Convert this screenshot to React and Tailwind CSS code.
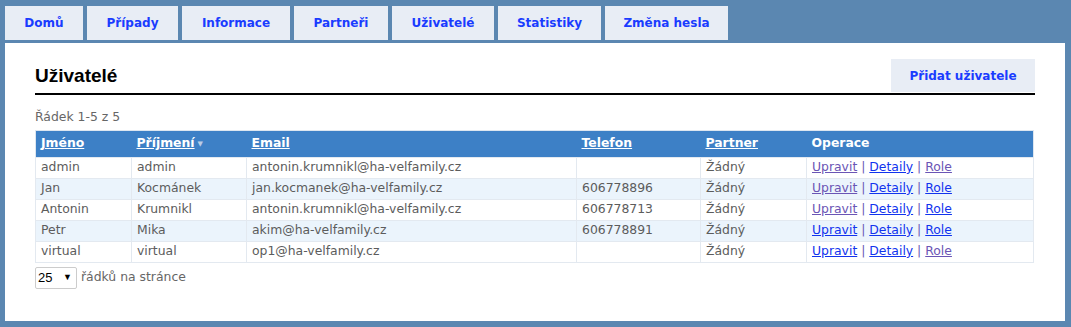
const TABS = ["Domů", "Případy", "Informace", "Partneři", "Uživatelé", "Statistiky", "Změna hesla"];
const TAB_WIDTHS = ["w-[78px]", "w-[91px]", "w-[108px]", "w-[94px]", "w-[102px]", "w-[103px]", "w-[123px]"];

const USERS = [
  { jmeno: "admin", prijmeni: "admin", email: "antonin.krumnikl@ha-velfamily.cz", tel: "", links: [true, false, true] },
  { jmeno: "Jan", prijmeni: "Kocmánek", email: "jan.kocmanek@ha-velfamily.cz", tel: "606778896", links: [true, false, false] },
  { jmeno: "Antonin", prijmeni: "Krumnikl", email: "antonin.krumnikl@ha-velfamily.cz", tel: "606778713", links: [true, false, false] },
  { jmeno: "Petr", prijmeni: "Mika", email: "akim@ha-velfamily.cz", tel: "606778891", links: [false, false, false] },
  { jmeno: "virtual", prijmeni: "virtual", email: "op1@ha-velfamily.cz", tel: "", links: [false, false, true] },
];

function OpLink({ visited, children }) {
  return (
    <a href="#" className={visited ? "text-[#6a55b5] underline" : "text-[#1133ee] underline"}>
      {children}
    </a>
  );
}

function HeadCell({ children, width, sorted }) {
  return (
    <th className={`${width} px-[5px] text-left font-bold`}>
      <span className="underline">{children}</span>
      {sorted && <span className="ml-[3px] inline-block align-middle text-[7px] text-[#b9cde6]">▼</span>}
    </th>
  );
}

export default function App() {
  return (
    <div className="h-[327px] w-[1071px] bg-[#5b87b1] px-[5px] pt-[6px] font-['DejaVu_Sans',sans-serif]">
      <div className="flex gap-[4px]">
        {TABS.map((t, i) => (
          <div
            key={t}
            className={`${TAB_WIDTHS[i]} flex h-[34px] items-center justify-center bg-[#e8edf5] text-[12px] font-bold text-[#1a3cff]`}
          >
            {t}
          </div>
        ))}
      </div>
      <div className="mt-[3px] h-[278px] w-[1060px] bg-white px-[30px] pt-[16px]">
        <div className="flex items-end justify-between border-b-2 border-black">
          <h1 className="pb-[3px] font-['Liberation_Sans',sans-serif] text-[19px] font-bold text-black">Uživatelé</h1>
          <button className="mb-[1px] h-[33px] w-[144px] bg-[#e8edf5] text-[12px] font-bold text-[#1a3cff]">
            Přidat uživatele
          </button>
        </div>
        <div className="mt-[13px] text-[12.4px] text-[#666]">Řádek 1-5 z 5</div>
        <table className="mt-[3px] w-[999px] border-collapse text-[12.4px] text-[#5c5c5c]">
          <thead>
            <tr className="h-[27px] border border-[#dde6f0] bg-[#3d80c6] text-white">
              <HeadCell width="w-[96px]">Jméno</HeadCell>
              <HeadCell width="w-[115px]" sorted>
                Příjmení
              </HeadCell>
              <HeadCell width="w-[330px]">Email</HeadCell>
              <HeadCell width="w-[124px]">Telefon</HeadCell>
              <HeadCell width="w-[106px]">Partner</HeadCell>
              <th className="px-[5px] text-left font-bold">Operace</th>
            </tr>
          </thead>
          <tbody>
            {USERS.map((u, i) => (
              <tr key={i} className={`h-[21px] ${i % 2 ? "bg-[#ebf4fc]" : "bg-white"}`}>
                <td className="border border-[#e3e9f0] px-[5px]">{u.jmeno}</td>
                <td className="border border-[#e3e9f0] px-[5px]">{u.prijmeni}</td>
                <td className="border border-[#e3e9f0] px-[5px]">{u.email}</td>
                <td className="border border-[#e3e9f0] px-[5px]">{u.tel}</td>
                <td className="border border-[#e3e9f0] px-[5px]">Žádný</td>
                <td className="border border-[#e3e9f0] px-[5px]">
                  <OpLink visited={u.links[0]}>Upravit</OpLink>
                  <span className="text-[#6a55b5]"> | </span>
                  <OpLink visited={u.links[1]}>Detaily</OpLink>
                  <span className="text-[#6a55b5]"> | </span>
                  <OpLink visited={u.links[2]}>Role</OpLink>
                </td>
              </tr>
            ))}
          </tbody>
        </table>
        <div className="mt-[4px] flex items-center gap-[4px]">
          <div className="flex h-[22px] w-[42px] items-center justify-between rounded-[2px] border border-[#ccc] bg-white pl-[2px] pr-[4px] font-['Liberation_Sans',sans-serif] text-[13px] text-black">
            <span>25</span>
            <span className="text-[9px]">▼</span>
          </div>
          <span className="text-[12.4px] text-[#666]">řádků na stránce</span>
        </div>
      </div>
    </div>
  );
}
